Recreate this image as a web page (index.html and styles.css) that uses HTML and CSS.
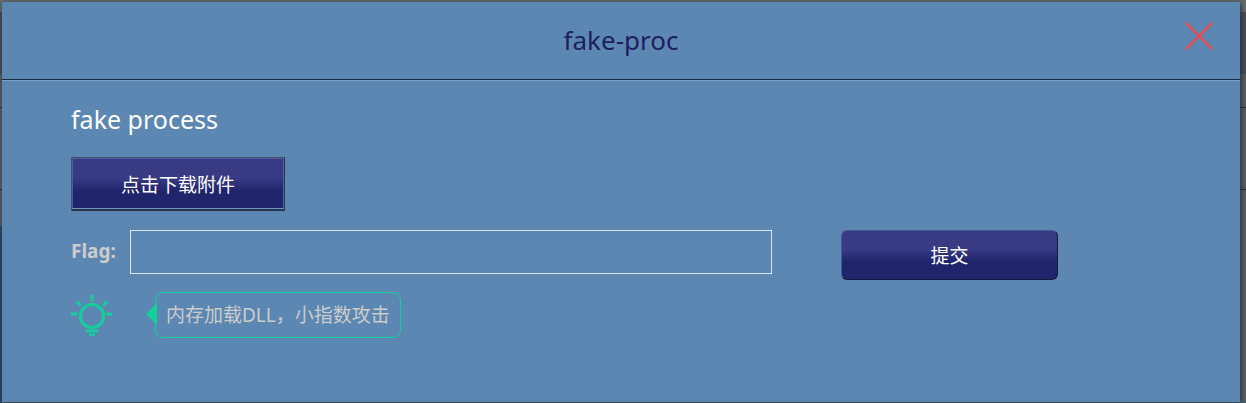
FILE: index.html
```html
<!DOCTYPE html>
<html lang="zh-CN">
<head>
<meta charset="utf-8">
<title>fake-proc</title>
<link rel="stylesheet" href="styles.css">
</head>
<body>
<main class="dialog">
  <header class="dialog-header">
    <h1 class="dialog-title">fake-proc</h1>
    <button class="close" type="button" aria-label="关闭">
      <svg width="30" height="30" viewBox="0 0 30 30"><path d="M2 2L28 28M28 2L2 28" fill="none" stroke="#f0474c" stroke-width="2.4"/></svg>
    </button>
  </header>
  <section class="dialog-body">
    <h2 class="description">fake process</h2>
    <button class="button download" type="button">点击下载附件</button>
    <form class="flag-form">
      <label class="flag-label" for="flag">Flag:</label>
      <input class="flag-input" id="flag" type="text">
      <button class="button submit" type="button">提交</button>
    </form>
    <div class="hint">
      <svg class="bulb" width="42" height="42" viewBox="0 0 42 42" fill="none" stroke="#15cf9b" stroke-width="3">
        <circle cx="21" cy="22" r="11.5"/>
        <path d="M21 1v6M6 7.5l4 4M36 7.5l-4 4M0 20h6M35 20h6M15 37h12M18 41h6"/>
      </svg>
      <p class="bubble">内存加载DLL，小指数攻击</p>
    </div>
  </section>
</main>
</body>
</html>
```
FILE: styles.css
```css
* {
  box-sizing: border-box;
}

body {
  margin: 0;
  min-height: 100vh;
  display: flex;
  padding: 2px 6px 1px 2px;
  font-family: "Noto Sans", "Noto Sans CJK SC", sans-serif;
  background:
    linear-gradient(#252b35, #252b35) 0 107px / 100% 1px no-repeat,
    linear-gradient(#252b35, #252b35) 0 189px / 100% 1px no-repeat,
    linear-gradient(#30445c, #30445c) 0 226px / 2px 100% no-repeat,
    linear-gradient(#666b6d 12px, #464c57 12px, #464c57 74px, #565d61 74px);
}

.dialog {
  flex: 1;
  background: #5b87b2;
  box-shadow: 1px 1px 5px #25303c;
}

.dialog-header {
  display: grid;
  grid-template-columns: 56px 1fr 56px;
  align-items: center;
  height: 78px;
  border-bottom: 1px solid #182b48;
  box-shadow: 0 1px #789fca;
}

.dialog-title {
  grid-column: 2;
  margin: 0 0 2px;
  color: #1f2060;
  font-size: 26px;
  font-weight: 400;
  line-height: 36px;
  text-align: center;
}

.close {
  width: 30px;
  height: 30px;
  margin-bottom: 9px;
  padding: 0;
  border: 0;
  background: none;
  cursor: pointer;
}

.close svg {
  display: block;
}

.dialog-body {
  padding: 21px 69px;
}

.description {
  margin: 0 0 20px;
  color: #fff;
  font-size: 25px;
  font-weight: 400;
  line-height: 36px;
}

.button {
  display: block;
  color: #fff;
  font-family: inherit;
  font-size: 19px;
  background: linear-gradient(#383b84 38%, #20246b 64%);
  cursor: pointer;
}

.download {
  width: 214px;
  height: 54px;
  border: 1px solid;
  border-color: #465169 #29344f #29344f #465169;
  box-shadow: inset 0 -1px #29344f, inset 0 -2px #7094c2, inset -1px 0 #50649a, inset 1px 1px #4c5ba0;
}

.flag-form {
  display: flex;
  align-items: flex-start;
  margin-top: 19px;
}

.flag-label {
  flex: 0 0 59px;
  color: #ccc;
  font-size: 19px;
  font-weight: 700;
  line-height: 42px;
}

.flag-input {
  flex: 0 1 642px;
  min-width: 0;
  height: 44px;
  padding: 0 12px;
  border: 1px solid #dce8f5;
  background: transparent;
  color: #fff;
  font: inherit;
  font-size: 19px;
}

.submit {
  flex: 0 0 217px;
  height: 50px;
  margin-left: 69px;
  border: 1px solid;
  border-color: #4b5799 #15193c #15193c #4b5799;
  border-radius: 6px;
}

.hint {
  display: flex;
  align-items: center;
  gap: 42px;
  margin-top: 12px;
}

.bubble {
  position: relative;
  margin: 0;
  padding: 1px 10px 0;
  border: 1px solid #15cf9b;
  border-radius: 8px;
  color: #ccc;
  font-size: 19px;
  line-height: 43px;
}

.bubble::before {
  content: "";
  position: absolute;
  top: 10px;
  left: -10px;
  border: solid transparent;
  border-width: 11px 11px 11px 0;
  border-right-color: #15cf9b;
}
```
